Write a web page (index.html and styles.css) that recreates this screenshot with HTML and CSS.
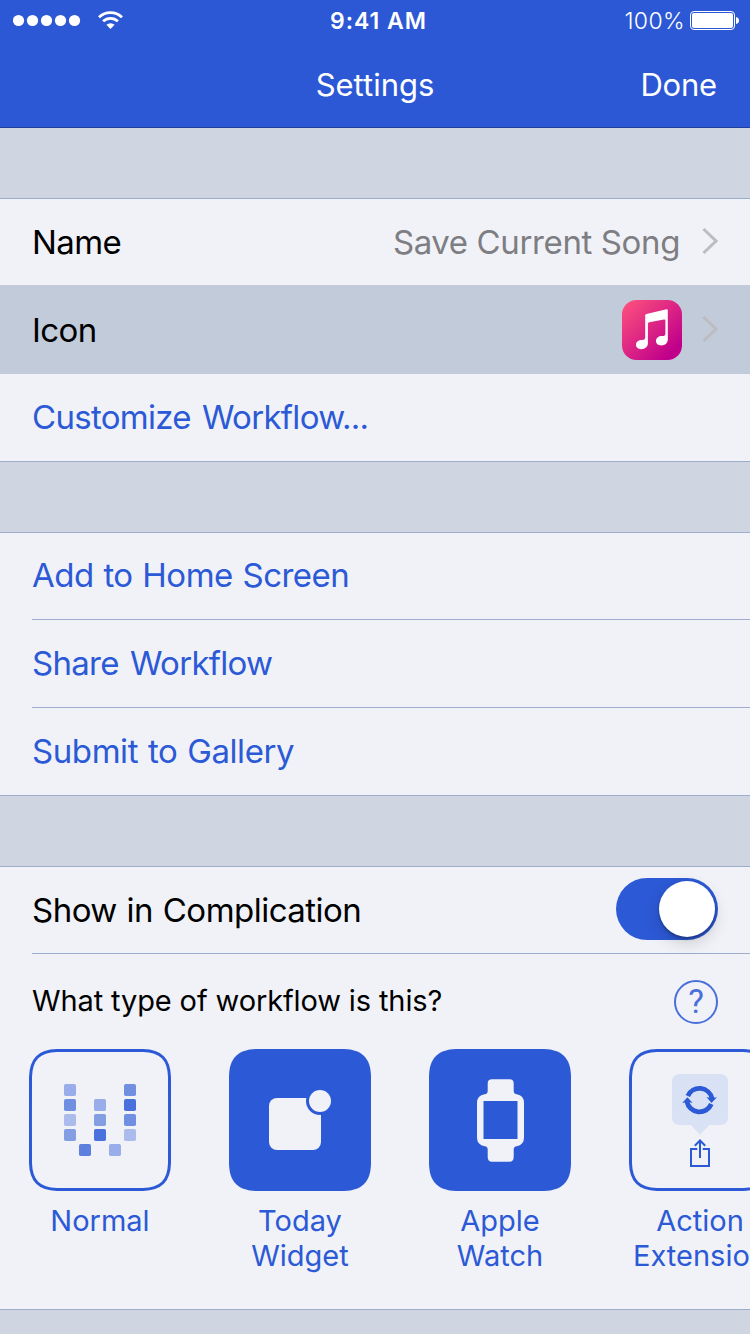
FILE: index.html
```html
<!DOCTYPE html>
<html lang="en">
<head>
<meta charset="utf-8">
<title>Settings</title>
<link rel="stylesheet" href="styles.css">
</head>
<body>
<div class="screen">
  <header class="header">
    <div class="status">
      <svg class="signal" width="112" height="24" viewBox="0 0 112 24">
        <g fill="#fff">
          <circle cx="5.5" cy="12.5" r="5.6"/><circle cx="19.5" cy="12.5" r="5.6"/><circle cx="33.5" cy="12.5" r="5.6"/><circle cx="47.5" cy="12.5" r="5.6"/><circle cx="61.5" cy="12.5" r="5.6"/>
          <path d="M97.5 21 L93.4 16.8 A6 6 0 0 1 101.6 16.8 Z"/>
        </g>
        <g fill="none" stroke="#fff" stroke-width="2.7">
          <path d="M90.1 13.3 A10.7 10.7 0 0 1 104.9 13.3"/>
          <path d="M86 9.2 A16.6 16.6 0 0 1 109 9.2"/>
        </g>
      </svg>
      <span class="time">9:41 AM</span>
      <span class="power">
        <span class="percent">100%</span>
        <svg width="49" height="19" viewBox="0 0 49 19">
          <rect x=".5" y=".5" width="44" height="18" rx="3.5" fill="none" stroke="#fff"/>
          <rect x="2" y="2" width="41" height="15" rx="2" fill="#fff"/>
          <path d="M46 6 Q49 6.500 49 9.500 Q49 12.500 46 13 Z" fill="#fff"/>
        </svg>
      </span>
    </div>
    <nav class="nav">
      <span></span>
      <span class="title">Settings</span>
      <span class="done">Done</span>
    </nav>
  </header>

  <section class="group">
    <div class="row">
      <span class="name">Name</span>
      <span class="value">Save Current Song</span>
      <svg class="chevron" width="17" height="28" viewBox="0 0 17 28"><path d="M2.500 2 L15 14 L2.500 26" /></svg>
    </div>
    <div class="row selected">
      <span class="icon-label">Icon</span>
      <svg class="app" width="60" height="60" viewBox="0 0 60 60">
        <defs><linearGradient id="pink" x1="0" y1="0" x2="1" y2="1"><stop offset=".05" stop-color="#fc4f7d"/><stop offset=".85" stop-color="#c0008b"/></linearGradient></defs>
        <rect width="60" height="60" rx="14.500" fill="url(#pink)"/>
        <path fill="#fff" d="M23.200 15.500 Q23.200 14.200 24.500 13.900 L44.500 9.300 Q45.800 9 45.800 10.400 V39.500 C45.800 43.500 42.800 45.400 39.500 45.400 C36 45.400 34 43.500 34 41 C34 38 36.500 36 40 36 C42.500 36 43.400 35.500 43.400 33.500 V20.800 Q43.400 19.300 42 19.600 L27.200 22.300 Q25.900 22.600 25.900 24 V43 C25.900 47 22.800 49.200 19.400 49.200 C16 49.200 14 47.200 14 44.800 C14 41.800 16.600 39.900 20 39.900 C22.500 39.900 23.200 39 23.200 37 Z"/>
      </svg>
      <svg class="chevron" width="17" height="28" viewBox="0 0 17 28"><path d="M2.500 2 L15 14 L2.500 26" /></svg>
    </div>
    <div class="row last"><span class="link customize">Customize Workflow...</span></div>
  </section>

  <section class="group">
    <div class="row first"><span class="link home">Add to Home Screen</span></div>
    <div class="row ruled"><span class="link share">Share Workflow</span></div>
    <div class="row ruled"><span class="link submit">Submit to Gallery</span></div>
  </section>

  <section class="group">
    <div class="row">
      <span class="complication">Show in Complication</span>
      <span class="toggle"><span class="knob"></span></span>
    </div>
    <div class="types ruled">
      <div class="question">
        <span class="prompt">What type of workflow is this?</span>
        <span class="help">?</span>
      </div>
      <div class="tiles">
        <figure class="tile">
          <svg width="142" height="142" viewBox="0 0 142 142">
            <path class="outline" d="M28 1.500 Q71 1.400 114 1.500 C132 2 140 10 140.500 28 Q140.600 71 140.500 114 C140 132 132 140 114 140.500 Q71 140.600 28 140.500 C10 140 2 132 1.500 114 Q1.400 71 1.500 28 C2 10 10 2 28 1.500 Z"/>
            <g class="ink">
              <rect x="35" y="35" width="12" height="12" rx="1.800" opacity=".45"/>
              <rect x="35" y="50" width="12" height="12" rx="1.800" opacity=".65"/>
              <rect x="35" y="65" width="12" height="12" rx="1.800" opacity=".35"/>
              <rect x="35" y="80" width="12" height="12" rx="1.800" opacity=".55"/>
              <rect x="50" y="95" width="12" height="12" rx="1.800" opacity=".75"/>
              <rect x="65" y="50" width="12" height="12" rx="1.800" opacity=".45"/>
              <rect x="65" y="65" width="12" height="12" rx="1.800" opacity=".55"/>
              <rect x="65" y="80" width="12" height="12" rx="1.800" opacity=".85"/>
              <rect x="80" y="95" width="12" height="12" rx="1.800" opacity=".45"/>
              <rect x="95" y="35" width="12" height="12" rx="1.800" opacity=".65"/>
              <rect x="95" y="50" width="12" height="12" rx="1.800" opacity=".85"/>
              <rect x="95" y="65" width="12" height="12" rx="1.800" opacity=".65"/>
              <rect x="95" y="80" width="12" height="12" rx="1.800" opacity=".35"/>
            </g>
          </svg>
          <figcaption class="normal">Normal</figcaption>
        </figure>
        <figure class="tile">
          <svg width="142" height="142" viewBox="0 0 142 142">
            <path class="ink" d="M27 0 H115 C133 .5 141.500 9 142 27 V115 C141.500 133 133 141.500 115 142 H27 C9 141.500 .5 133 0 115 V27 C.5 9 9 .5 27 0 Z"/>
            <rect class="paper" x="40" y="49" width="52" height="52" rx="8"/>
            <circle class="ink" cx="91" cy="52" r="14"/>
            <circle class="paper" cx="91" cy="52" r="11"/>
          </svg>
          <figcaption class="today">Today<br>Widget</figcaption>
        </figure>
        <figure class="tile">
          <svg width="142" height="142" viewBox="0 0 142 142">
            <path class="ink" d="M27 0 H115 C133 .5 141.500 9 142 27 V115 C141.500 133 133 141.500 115 142 H27 C9 141.500 .5 133 0 115 V27 C.5 9 9 .5 27 0 Z"/>
            <path class="paper" d="M63 30.300 H80.500 Q84.700 30.300 84.700 34.500 V42 Q84.700 45 87.700 45.300 Q95 46.500 95 54 V88.500 Q95 96 87.700 97.200 Q84.700 97.500 84.700 100.500 V108 Q84.700 112.700 80.500 112.700 H63 Q58.700 112.700 58.700 108 V100.500 Q58.700 97.500 55.700 97.200 Q48 96 48 88.500 V54 Q48 46.500 55.700 45.300 Q58.700 45 58.700 42 V34.500 Q58.700 30.300 63 30.300 Z"/>
            <rect class="ink" x="54.500" y="52" width="34" height="38"/>
          </svg>
          <figcaption class="watch">Apple<br>Watch</figcaption>
        </figure>
        <figure class="tile">
          <svg width="142" height="142" viewBox="0 0 142 142">
            <path class="outline" d="M28 1.500 Q71 1.400 114 1.500 C132 2 140 10 140.500 28 Q140.600 71 140.500 114 C140 132 132 140 114 140.500 Q71 140.600 28 140.500 C10 140 2 132 1.500 114 Q1.400 71 1.500 28 C2 10 10 2 28 1.500 Z"/>
            <path fill="#d9e2f5" d="M51 25 H91 Q99 25 99 33 V68 Q99 76 91 76 H80.500 L71 85.700 L62 76 H51 Q43 76 43 68 V33 Q43 25 51 25 Z"/>
            <g class="lines" stroke-width="4.800">
              <path d="M58.800 47 A12.800 12.800 0 0 1 83 49.500"/>
              <path d="M57.900 52.500 A12.800 12.800 0 0 0 82.300 55"/>
            </g>
            <path class="ink" d="M77.500 48 L82 49 L87.900 48.200 L82.500 54 Z M53.200 54 L58.400 48.300 L63.700 54 L59 52.700 Z"/>
            <g class="lines" stroke-width="2">
              <path d="M68.300 100 H62 V117 H80 V100 H73.700"/>
              <path d="M71 109 V92 M65.800 96.700 L71 91.500 L76.200 96.700"/>
            </g>
          </svg>
          <figcaption class="action">Action<br>Extension</figcaption>
        </figure>
      </div>
    </div>
  </section>
</div>
</body>
</html>
```
FILE: styles.css
```css
* { box-sizing: border-box; }
body { margin: 0; font-family: Inter, "Liberation Sans", sans-serif; }
svg { display: block; flex: none; }

.screen {
  width: 750px;
  height: 1334px;
  overflow: hidden;
  background: #cfd6e1;
  color: #000;
  white-space: nowrap;
}

.header {
  height: 128px;
  background: #2c58d6;
  border-bottom: 1px solid #1f3f98;
  color: #fff;
}
.status {
  display: grid;
  grid-template-columns: 1fr auto 1fr;
  align-items: center;
  height: 41px;
  padding: 0 11px 0 13px;
  font-size: 23px;
}
.signal { margin-top: -1px; }
.time { margin-right: -5px; font-weight: 600; font-size: 23px; letter-spacing: 1px; }
.power { display: flex; justify-content: flex-end; align-items: center; gap: 5px; }
.percent { font-weight: 300; letter-spacing: .4px; }

.nav {
  display: grid;
  grid-template-columns: 1fr auto 1fr;
  align-items: center;
  height: 87px;
  padding: 0 33px;
  font-size: 31px;
}
.done { text-align: right; letter-spacing: -.2px; }

.group {
  margin-top: 70px;
  background: #f0f2f7;
  border-top: 1px solid #9dadcc;
  border-bottom: 1px solid #9dadcc;
}
.row {
  display: flex;
  align-items: center;
  height: 86px;
  padding: 0 32px;
  font-size: 33px;
  letter-spacing: -.52px;
  word-spacing: 1px;
}
.row.selected { height: 89px; background: #c2cbda; }
.row.last { height: 87px; padding-bottom: 2px; }
.row.first { padding-bottom: 2px; }
.ruled { background: linear-gradient(#9dadcc, #9dadcc) 32px 0 / 100% 1px no-repeat; }
.row.ruled { height: 88px; }
.link { color: #2c59d6; }
.name, .icon-label { letter-spacing: -.6px; }
.customize, .share { letter-spacing: -.7px; word-spacing: 2.5px; }
.submit { letter-spacing: -.42px; }
.value { margin-left: auto; color: #7d7d82; letter-spacing: -.38px; word-spacing: 0; }
.chevron { margin: -2px 0 0 21px; fill: none; stroke: #bcbcc1; stroke-width: 3; }
.app { margin-left: auto; }
.app + .chevron { margin-left: 19px; }

.toggle {
  display: flex;
  justify-content: flex-end;
  width: 102px;
  height: 62px;
  margin: -2px 0 0 auto;
  padding: 3px;
  border-radius: 31px;
  background: #2c59d6;
}
.knob {
  width: 56px;
  height: 56px;
  border-radius: 50%;
  background: #fff;
  box-shadow: 0 2px 3px rgba(0, 0, 0, .3), 0 6px 16px rgba(0, 0, 0, .16);
}

.types { height: 356px; }
.question {
  display: flex;
  justify-content: space-between;
  align-items: center;
  height: 96px;
  padding: 0 32px;
  font-size: 29px;
}
.prompt { margin-top: -2px; letter-spacing: -.12px; }
.help {
  display: flex;
  justify-content: center;
  align-items: center;
  width: 44px;
  height: 44px;
  margin-top: 2px;
  border: 2px solid #2c59d6;
  border-radius: 50%;
  color: #2c59d6;
  font-family: Roboto, sans-serif;
  font-size: 33px;
  line-height: 40px;
  opacity: .85;
}
.tiles { display: flex; gap: 58px; padding-left: 29px; overflow: hidden; }
.tile { flex: none; width: 142px; margin: 0; }
.tile figcaption {
  display: flow-root;
  margin: 12px -20px 0;
  color: #2c59d6;
  font-size: 29px;
  line-height: 35px;
  text-align: center;
}
.ink { fill: #2c59d6; }
.paper { fill: #f0f2f7; }
.outline { fill: none; stroke: #2c59d6; stroke-width: 3; }
.lines { fill: none; stroke: #2c59d6; }
```
